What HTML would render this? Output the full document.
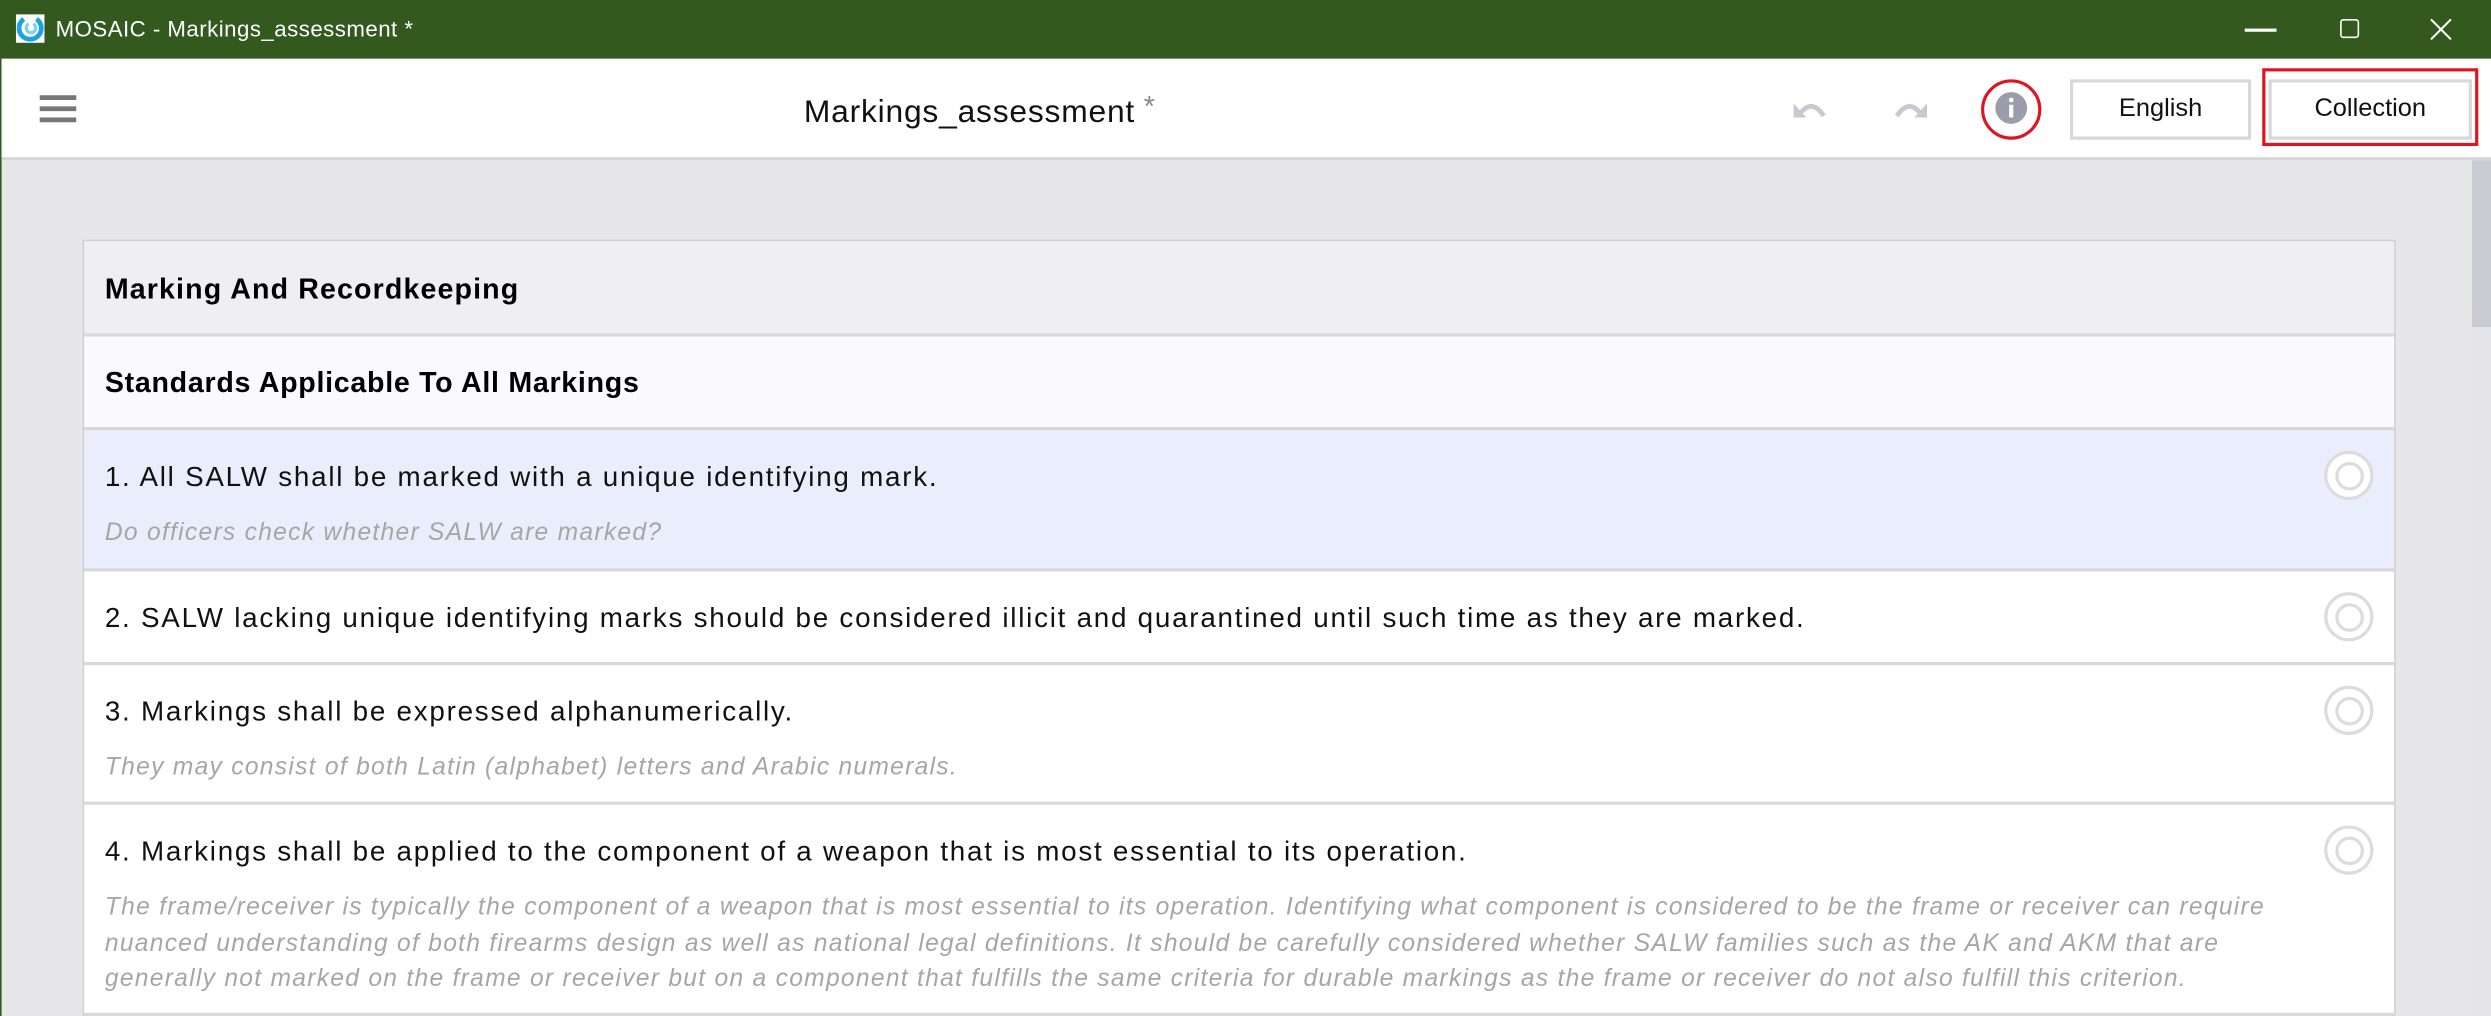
<!DOCTYPE html>
<html><head><meta charset="utf-8">
<style>
html,body{margin:0;padding:0;width:2491px;height:1016px;overflow:hidden;background:#e7e7ea;}
#w{position:absolute;left:0;top:0;width:1568px;height:640px;transform:scale(1.58865,1.5875);transform-origin:0 0;font-family:"Liberation Sans",sans-serif;background:#e7e7ea;overflow:hidden;}
.tb{position:absolute;left:0;top:0;width:1568px;height:37px;background:#34591e;}
.tb .t{position:absolute;left:35px;top:10px;color:#fff;font-size:14px;letter-spacing:0.3px;}
.hd{position:absolute;left:1px;top:37px;width:1567px;height:62px;background:#fff;border-bottom:2px solid #d6d6d6;}
.lb{position:absolute;left:0;top:37px;width:1px;height:603px;background:#34591e;}
.ham{position:absolute;left:24px;width:23px;height:3px;background:#777;}
.ttl{position:absolute;left:506px;top:57px;font-size:20px;color:#111;letter-spacing:0.5px;}
.ttl span{color:#888;font-size:18px;vertical-align:4px;}
.btn{position:absolute;top:50px;height:34px;border:2px solid #d8d8d8;background:#fff;font-size:16px;color:#111;text-align:center;line-height:34px;}
.sb{position:absolute;left:1556px;top:101px;width:12px;height:539px;background:#e4e4e8;}
.sb div{width:12px;height:105px;background:#cbcbd3;}
.card{position:absolute;left:52px;top:151px;width:1454px;border:1px solid #d0d0d0;border-bottom:none;}
.row{position:relative;border-bottom:2px solid #d8d8d8;box-sizing:border-box;}
.h1{height:60px;background:#efeff3;font-weight:bold;font-size:18px;letter-spacing:0.7px;padding:20px 0 0 13px;}
.h2{height:59px;background:#fafafc;font-weight:bold;font-size:18px;letter-spacing:0.45px;padding:19px 0 0 13px;}
.it{background:#fff;padding:19px 0 0 13px;}
.m{font-size:17.5px;color:#111;white-space:nowrap;letter-spacing:1.1px;}
.s{font-size:15.5px;color:#a6a6a6;font-style:italic;white-space:nowrap;line-height:22.5px;margin-top:14px;letter-spacing:0.8px;}
.r{position:absolute;left:1410px;width:27px;height:27px;border:2px solid #dcdcdc;border-radius:50%;background:#fff;}
.r::after{content:"";position:absolute;left:5px;top:5px;width:14px;height:14px;border:2px solid #dcdcdc;border-radius:50%;}
</style></head><body>
<div id="w">
<div class="tb">
 <svg style="position:absolute;left:10px;top:9px" width="18" height="18" viewBox="0 0 18 18"><rect width="18" height="18" fill="#fff"/><path d="M5 3 A7 7 0 1 0 13 3" stroke="#1aa3e0" stroke-width="3" fill="none"/><path d="M8 6 A3 3 0 1 0 11 6" stroke="#7fd0f5" stroke-width="2" fill="none"/></svg>
 <div class="t">MOSAIC - Markings_assessment *</div>
 <div style="position:absolute;left:1413px;top:18px;width:20px;height:1.5px;background:#fff"></div>
 <div style="position:absolute;left:1473px;top:12px;width:10px;height:10px;border:1.5px solid #fff;border-radius:2px"></div>
 <svg style="position:absolute;left:1530px;top:12px" width="13" height="13"><path d="M0 0L13 13M13 0L0 13" stroke="#fff" stroke-width="1.3"/></svg>
</div>
<div class="lb"></div>
<div class="hd">
 <div class="ham" style="top:23px"></div><div class="ham" style="top:30px"></div><div class="ham" style="top:37px"></div>
</div>
<div class="ttl">Markings_assessment<span> *</span></div>
<svg style="position:absolute;left:1128px;top:61px" width="24" height="14" viewBox="0 0 24 14"><path d="M4 12 Q12 0 20 12" stroke="#c9c9d2" stroke-width="3" fill="none"/><path d="M1 4 L1 13 L9 13Z" fill="#c9c9d2"/></svg>
<svg style="position:absolute;left:1190px;top:61px" width="24" height="14" viewBox="0 0 24 14"><path d="M4 12 Q12 0 20 12" stroke="#c9c9d2" stroke-width="3" fill="none"/><path d="M23 4 L23 13 L15 13Z" fill="#c9c9d2"/></svg>
<svg style="position:absolute;left:1246px;top:49px" width="40" height="40" viewBox="0 0 40 40"><ellipse cx="20" cy="20" rx="18" ry="18" stroke="#e0141e" stroke-width="2" fill="none"/><circle cx="20" cy="19" r="10" fill="#9c9cab"/><rect x="18.7" y="17" width="2.6" height="8" fill="#fff"/><circle cx="20" cy="14" r="1.5" fill="#fff"/></svg>
<div class="btn" style="left:1303px;width:110px">English</div>
<div style="position:absolute;left:1424px;top:43px;width:132px;height:45px;border:2px solid #e0141e"></div>
<div class="btn" style="left:1428px;width:124px">Collection</div>
<div class="sb"><div></div></div>
<div class="card">
 <div class="row h1">Marking And Recordkeeping</div>
 <div class="row h2">Standards Applicable To All Markings</div>
 <div class="row it" style="height:89px;background:#eaedfc">
  <div class="m">1. All SALW shall be marked with a unique identifying mark.</div>
  <div class="s">Do officers check whether SALW are marked?</div>
  <div class="r" style="top:13px"></div>
 </div>
 <div class="row it" style="height:59px">
  <div class="m">2. SALW lacking unique identifying marks should be considered illicit and quarantined until such time as they are marked.</div>
  <div class="r" style="top:13px"></div>
 </div>
 <div class="row it" style="height:88px">
  <div class="m">3. Markings shall be expressed alphanumerically.</div>
  <div class="s">They may consist of both Latin (alphabet) letters and Arabic numerals.</div>
  <div class="r" style="top:13px"></div>
 </div>
 <div class="row it" style="height:133px">
  <div class="m">4. Markings shall be applied to the component of a weapon that is most essential to its operation.</div>
  <div class="s">The frame/receiver is typically the component of a weapon that is most essential to its operation. Identifying what component is considered to be the frame or receiver can require<br>nuanced understanding of both firearms design as well as national legal definitions. It should be carefully considered whether SALW families such as the AK and AKM that are<br>generally not marked on the frame or receiver but on a component that fulfills the same criteria for durable markings as the frame or receiver do not also fulfill this criterion.</div>
  <div class="r" style="top:13px"></div>
 </div>
</div>
</div>
</body></html>
